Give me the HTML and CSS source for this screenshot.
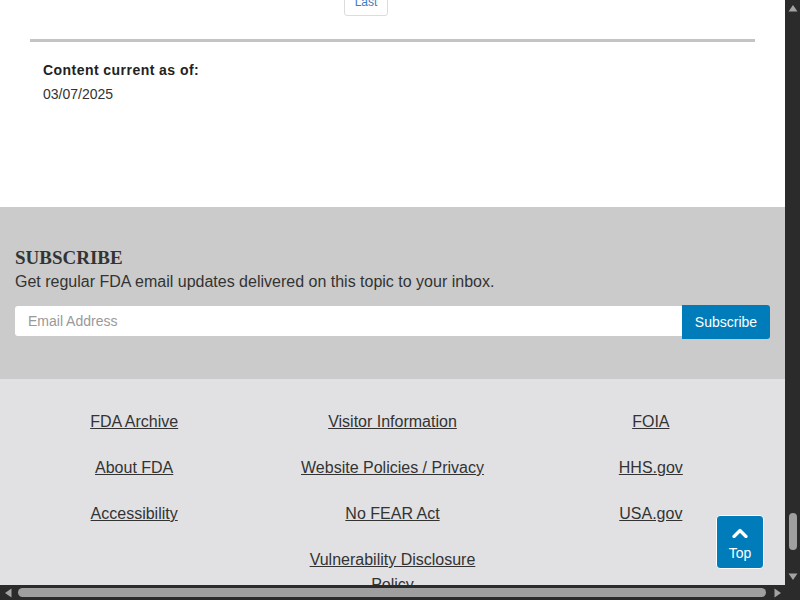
FILE: index.html
```html
<!DOCTYPE html>
<html lang="en">
<head>
<meta charset="utf-8">
<title>FDA</title>
<link rel="stylesheet" href="styles.css">
</head>
<body>
<div class="window">
  <div class="viewport">
    <div class="main">
      <div class="pager"><a class="page-btn" href="#">Last</a></div>
      <div class="rule"></div>
      <div class="updated">
        <div class="updated-label">Content current as of:</div>
        <div class="updated-date">03/07/2025</div>
      </div>
    </div>
    <section class="subscribe">
      <h2 class="sub-title">SUBSCRIBE</h2>
      <p class="sub-text">Get regular FDA email updates delivered on this topic to your inbox.</p>
      <form class="sub-form">
        <input class="sub-input" type="text" placeholder="Email Address">
        <button class="sub-btn" type="button">Subscribe</button>
      </form>
    </section>
    <footer class="footer">
      <div class="col">
        <a href="#">FDA Archive</a>
        <a href="#">About FDA</a>
        <a href="#">Accessibility</a>
      </div>
      <div class="col col-mid">
        <a href="#">Visitor Information</a>
        <a href="#">Website Policies / Privacy</a>
        <a href="#">No FEAR Act</a>
        <a href="#">Vulnerability Disclosure Policy</a>
      </div>
      <div class="col">
        <a href="#">FOIA</a>
        <a href="#">HHS.gov</a>
        <a href="#">USA.gov</a>
      </div>
    </footer>
    <a class="top-btn" href="#">
      <svg width="16" height="10" viewBox="0 0 16 10"><path d="M2 8.5 L8 2.5 L14 8.5" fill="none" stroke="#fff" stroke-width="3.2" stroke-linecap="round" stroke-linejoin="round"/></svg>
      <span>Top</span>
    </a>
  </div>
  <div class="vscroll">
    <div class="arrow"><svg width="10" height="8" viewBox="0 0 10 8"><path d="M0.5 7.5 L5 1 L9.5 7.5 Z" fill="#a3a3a3"/></svg></div>
    <div class="vtrack"><div class="vthumb"></div></div>
    <div class="arrow"><svg width="10" height="8" viewBox="0 0 10 8"><path d="M0.5 0.5 L5 7 L9.5 0.5 Z" fill="#a3a3a3"/></svg></div>
  </div>
  <div class="hscroll">
    <div class="harrow"><svg width="8" height="10" viewBox="0 0 8 10"><path d="M7.5 0.5 L1 5 L7.5 9.5 Z" fill="#a3a3a3"/></svg></div>
    <div class="htrack"><div class="hthumb"></div></div>
    <div class="harrow"><svg width="8" height="10" viewBox="0 0 8 10"><path d="M0.5 0.5 L7 5 L0.5 9.5 Z" fill="#a3a3a3"/></svg></div>
  </div>
  <div class="corner"></div>
</div>
</body>
</html>
```

FILE: styles.css
```css
* { box-sizing: border-box; }
html, body { margin: 0; padding: 0; overflow: hidden; }
body { font-family: "Liberation Sans", Arial, sans-serif; color: #333; }

.window {
  width: 800px;
  height: 600px;
  display: grid;
  grid-template-columns: 785px 15px;
  grid-template-rows: 585px 15px;
  background: #2b2b2b;
}

.viewport {
  position: relative;
  overflow: hidden;
  background: #fff;
}

.main {
  padding: 0 30px 103px;
}
.pager {
  margin-top: -16px;
  padding-left: 314px;
  display: flex;
}
.page-btn {
  display: block;
  width: 44px;
  height: 32px;
  line-height: 34px;
  text-align: center;
  font-size: 12px;
  color: #3b7dc4;
  text-decoration: none;
  border: 1px solid #dcdcdc;
  border-radius: 3px;
}
.rule {
  margin-top: 23px;
  height: 3px;
  background: #c4c4c4;
}
.updated {
  padding: 18px 13px 0;
  font-size: 14px;
}
.updated-label { font-weight: bold; line-height: 20px; color: #222; letter-spacing: 0.45px; }
.updated-date { margin-top: 4px; line-height: 20px; }

.subscribe {
  background: #cbcbcb;
  padding: 40px 15px 40px;
}
.sub-title {
  margin: 0;
  font-family: "Liberation Serif", "Times New Roman", serif;
  font-weight: bold;
  font-size: 19px;
  line-height: 22px;
  color: #333;
}
.sub-text {
  margin: 3px 0 0;
  font-size: 16px;
  line-height: 20px;
}
.sub-form {
  margin-top: 13px;
  display: flex;
  align-items: flex-start;
}
.sub-input {
  flex: 1;
  margin-top: 1px;
  height: 30px;
  border: 0;
  border-radius: 3px 0 0 3px;
  padding: 0 13px;
  font-family: "Liberation Sans", Arial, sans-serif;
  font-size: 14px;
  background: #fff;
  outline: none;
}
.sub-input::placeholder { color: #999; }
.sub-btn {
  width: 88px;
  height: 34px;
  border: 0;
  border-radius: 0 3px 3px 0;
  background: #007cba;
  color: #fff;
  font-family: "Liberation Sans", Arial, sans-serif;
  font-size: 14px;
  padding: 0;
}

.footer {
  background: #e1e1e3;
  padding: 30px 5px 40px;
  display: grid;
  grid-template-columns: repeat(3, 1fr);
}
.col {
  display: flex;
  flex-direction: column;
  align-items: center;
  gap: 21px;
  text-align: center;
}
.col a {
  font-size: 16px;
  line-height: 25px;
  color: #333;
  text-decoration: underline;
}
.col-mid a { max-width: 200px; }

.top-btn {
  position: absolute;
  right: 21px;
  bottom: 16px;
  width: 48px;
  height: 54px;
  background: #007cba;
  border: 1px solid #fff;
  border-radius: 4px;
  color: #fff;
  text-decoration: none;
  display: flex;
  flex-direction: column;
  align-items: center;
  padding-top: 12px;
  font-size: 14px;
}
.top-btn svg { display: block; }
.top-btn span { margin-top: 6px; line-height: 18px; }

.vscroll {
  display: flex;
  flex-direction: column;
  align-items: center;
}
.arrow {
  height: 16px;
  display: flex;
  align-items: center;
  justify-content: center;
  width: 15px;
}
.vtrack { flex: 1; width: 15px; padding-top: 497px; display: flex; justify-content: center; }
.vthumb { width: 8px; height: 37px; border-radius: 4px; background: #9f9f9f; }

.hscroll {
  display: flex;
  align-items: center;
}
.harrow {
  width: 15px;
  height: 15px;
  display: flex;
  align-items: center;
  justify-content: center;
}
.htrack { flex: 1; height: 15px; display: flex; align-items: center; padding: 0 4px 0 3px; }
.hthumb { flex: 1; height: 9px; border-radius: 4.5px; background: #9f9f9f; }
.corner { background: #2b2b2b; }
```
